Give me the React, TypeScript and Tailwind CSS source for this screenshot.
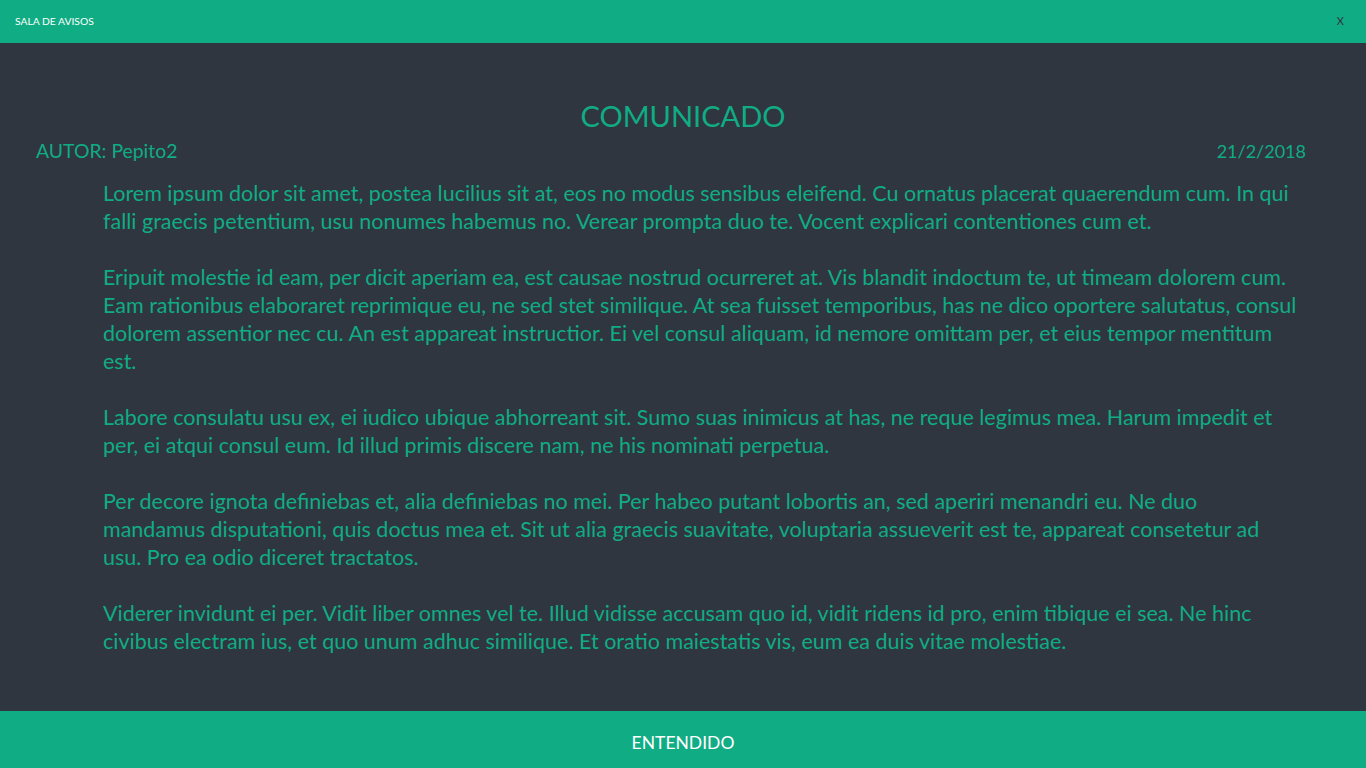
import React from 'react';

const paragraphs = [
  [
    'Lorem ipsum dolor sit amet, postea lucilius sit at, eos no modus sensibus eleifend. Cu ornatus placerat quaerendum cum. In qui',
    'falli graecis petentium, usu nonumes habemus no. Verear prompta duo te. Vocent explicari contentiones cum et.',
  ],
  [
    'Eripuit molestie id eam, per dicit aperiam ea, est causae nostrud ocurreret at. Vis blandit indoctum te, ut timeam dolorem cum.',
    'Eam rationibus elaboraret reprimique eu, ne sed stet similique. At sea fuisset temporibus, has ne dico oportere salutatus, consul',
    'dolorem assentior nec cu. An est appareat instructior. Ei vel consul aliquam, id nemore omittam per, et eius tempor mentitum',
    'est.',
  ],
  [
    'Labore consulatu usu ex, ei iudico ubique abhorreant sit. Sumo suas inimicus at has, ne reque legimus mea. Harum impedit et',
    'per, ei atqui consul eum. Id illud primis discere nam, ne his nominati perpetua.',
  ],
  [
    'Per decore ignota definiebas et, alia definiebas no mei. Per habeo putant lobortis an, sed aperiri menandri eu. Ne duo',
    'mandamus disputationi, quis doctus mea et. Sit ut alia graecis suavitate, voluptaria assueverit est te, appareat consetetur ad',
    'usu. Pro ea odio diceret tractatos.',
  ],
  [
    'Viderer invidunt ei per. Vidit liber omnes vel te. Illud vidisse accusam quo id, vidit ridens id pro, enim tibique ei sea. Ne hinc',
    'civibus electram ius, et quo unum adhuc similique. Et oratio maiestatis vis, eum ea duis vitae molestiae.',
  ],
];

export default function App() {
  return (
    <div className="h-screen flex flex-col bg-[#2f3640] font-['Lato','Open_Sans',sans-serif]">
      <header className="h-[43px] shrink-0 bg-[#10ac84] flex items-center justify-between pl-[15px] pr-[22px]">
        <span className="text-[10.3px] text-white">SALA DE AVISOS</span>
        <button className="text-[11px] text-[#2f3640]">X</button>
      </header>

      <main className="flex-1 pt-[55px]">
        <h1 className="text-center text-[29px] leading-[36px] text-[#10ac84]">COMUNICADO</h1>
        <div className="flex justify-between items-baseline pl-[36px] pr-[60px] mt-[6px] text-[19.4px] leading-[22px] text-[#10ac84]">
          <span>AUTOR: Pepito2</span>
          <span className="text-[18px]">21/2/2018</span>
        </div>
        <div className="pl-[103px] pt-[17px] text-[21.5px] leading-[28px] text-[#10ac84] flex flex-col gap-[28px]">
          {paragraphs.map((p, i) => (
            <p key={i}>
              {p.map((line, j) => (
                <span key={j} className="block whitespace-nowrap">{line}</span>
              ))}
            </p>
          ))}
        </div>
      </main>

      <footer className="h-[57px] shrink-0 bg-[#10ac84] flex items-center justify-center pt-[8px]">
        <span className="text-[17.5px] text-white">ENTENDIDO</span>
      </footer>
    </div>
  );
}
